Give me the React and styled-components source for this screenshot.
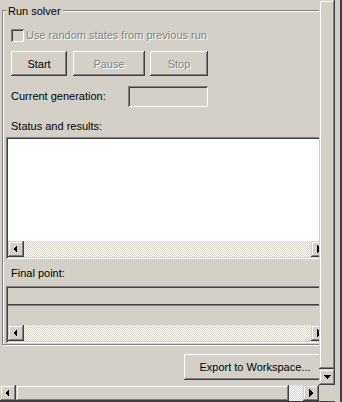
import React from 'react';
import styled, { createGlobalStyle, css } from 'styled-components';

const face = '#d4d0c8';

const GlobalStyle = createGlobalStyle`
  html, body {
    margin: 0;
    padding: 0;
    background: ${face};
  }
  body {
    font-family: "Liberation Sans", Arial, sans-serif;
    font-size: 11px;
    color: #000;
  }
  * {
    box-sizing: border-box;
  }
`;

const raised = css`
  background: ${face};
  box-shadow: inset -1px -1px #404040, inset 1px 1px #fff, inset -2px -2px #808080,
    inset 2px 2px ${face};
`;

const scrollRaised = css`
  background: ${face};
  box-shadow: inset -1px -1px #404040, inset 1px 1px ${face}, inset -2px -2px #808080,
    inset 2px 2px #fff;
`;

const sunken = css`
  box-shadow: inset 1px 1px #808080, inset -1px -1px #fff, inset 2px 2px #404040,
    inset -2px -2px ${face};
`;

const checkered = css`
  background-color: #fff;
  background-image: repeating-conic-gradient(${face} 0 25%, #fff 0 50%);
  background-size: 2px 2px;
`;

const Window = styled.div`
  width: 342px;
  height: 402px;
  display: flex;
  background: ${face};
  overflow: hidden;
`;

const Main = styled.div`
  width: 335px;
  display: flex;
  flex-direction: column;
`;

const Upper = styled.div`
  height: 385px;
  display: flex;
`;

const Viewport = styled.div`
  width: 319px;
  overflow: hidden;
`;

const Content = styled.div`
  width: 360px;
  display: flex;
  flex-direction: column;
  align-items: flex-start;
`;

const RightEdge = styled.div`
  width: 7px;
  height: 100%;
  background: ${face};
  border-right: 2px solid #404040;
`;

const GroupBox = styled.div`
  margin: 10px 0 0 2px;
  width: 336px;
  padding: 0 0 1px 3px;
  border: 1px solid #808080;
  box-shadow: inset 1px 1px #fff, 1px 1px #fff;
  display: flex;
  flex-direction: column;
  align-items: flex-start;
`;

const Title = styled.div`
  margin: -6px 0 0 1px;
  padding: 0 2px 0 1px;
  line-height: 13px;
  background: ${face};
`;

const CheckRow = styled.label`
  display: flex;
  align-items: center;
  gap: 2px;
  margin: 11px 0 0 5px;
  height: 13px;
`;

const CheckBox = styled.span`
  width: 13px;
  height: 13px;
  background: ${face};
  ${sunken};
`;

const DisabledText = styled.span`
  color: #808080;
  text-shadow: 1px 1px #fff;
  line-height: 13px;
`;

const ButtonRow = styled.div`
  display: flex;
  margin: 9px 0 0 5px;
`;

const Button = styled.button`
  ${raised};
  width: ${(p) => p.$w}px;
  height: ${(p) => p.$h || 25}px;
  margin-left: ${(p) => p.$gap || 0}px;
  border: none;
  padding: 0;
  font: inherit;
  color: ${(p) => (p.disabled ? '#808080' : '#000')};
  text-shadow: ${(p) => (p.disabled ? '1px 1px #fff' : 'none')};
`;

const GenRow = styled.div`
  display: flex;
  align-items: center;
  margin: 10px 0 0 5px;
`;

const Label = styled.div`
  width: ${(p) => (p.$w ? `${p.$w}px` : 'auto')};
  margin: ${(p) => p.$m || '0'};
  line-height: 13px;
`;

const Field = styled.div`
  width: 80px;
  height: 21px;
  background: ${face};
  box-shadow: inset 1px 1px #808080, inset -1px -1px #fff, inset 2px 2px #404040,
    inset -2px -2px ${face};
`;

const ListFrame = styled.div`
  ${sunken};
  width: 323px;
  height: ${(p) => p.$h}px;
  margin-top: ${(p) => p.$mt}px;
  padding: 2px;
  display: flex;
  flex-direction: column;
  background: ${(p) => (p.$white ? '#fff' : face)};
`;

const ListBody = styled.div`
  flex: 1;
`;

const HeaderRow = styled.div`
  height: 17px;
  border-bottom: 1px solid #404040;
  box-shadow: 0 1px #808080;
`;

const HScroll = styled.div`
  height: 16px;
  width: ${(p) => (p.$w ? `${p.$w}px` : 'auto')};
  display: flex;
  flex-shrink: 0;
`;

const Track = styled.div`
  flex: 1;
  display: flex;
  ${checkered};
`;

const Thumb = styled.div`
  ${scrollRaised};
  width: ${(p) => p.$w}px;
  height: 100%;
`;

const ArrowBox = styled.div`
  ${scrollRaised};
  width: 16px;
  height: 16px;
  flex-shrink: 0;
  display: flex;
  align-items: center;
  justify-content: center;
`;

const VScroll = styled.div`
  width: 16px;
  display: flex;
  flex-direction: column;
`;

const VThumb = styled.div`
  ${scrollRaised};
  flex: 1;
`;

const Corner = styled.div`
  width: 16px;
  height: 16px;
  background: ${face};
`;

const BottomLine = styled.div`
  height: 1px;
  background: #404040;
`;

const ExportButton = styled(Button)`
  margin: 9px 0 0 184px;
`;

const arrows = {
  left: '9,4 5,8 9,12',
  right: '6,4 10,8 6,12',
  down: '4,6 12,6 8,10',
};

const Arrow = ({ dir }) => (
  <ArrowBox>
    <svg width="16" height="16" viewBox="0 0 16 16">
      <polygon points={arrows[dir]} fill="#000" shapeRendering="crispEdges" />
    </svg>
  </ArrowBox>
);

const ScrollBar = ({ thumb, width }) => (
  <HScroll $w={width}>
    <Arrow dir="left" />
    {thumb ? <Thumb $w={thumb} /> : null}
    <Track />
    <Arrow dir="right" />
  </HScroll>
);

const App = () => {
  return (
    <>
      <GlobalStyle />
      <Window>
        <Main>
          <Upper>
            <Viewport>
              <Content>
                <GroupBox>
                  <Title>Run solver</Title>
                  <CheckRow>
                    <CheckBox />
                    <DisabledText>Use random states from previous run</DisabledText>
                  </CheckRow>
                  <ButtonRow>
                    <Button $w={56}>Start</Button>
                    <Button $w={72} $gap={6} disabled>
                      Pause
                    </Button>
                    <Button $w={58} $gap={5} disabled>
                      Stop
                    </Button>
                  </ButtonRow>
                  <GenRow>
                    <Label $w={117}>Current generation:</Label>
                    <Field />
                  </GenRow>
                  <Label $m="13px 0 0 5px">Status and results:</Label>
                  <ListFrame $h={122} $mt={4} $white>
                    <ListBody />
                    <ScrollBar />
                  </ListFrame>
                  <Label $m="8px 0 0 5px">Final point:</Label>
                  <ListFrame $h={57} $mt={6}>
                    <HeaderRow />
                    <ListBody />
                    <ScrollBar />
                  </ListFrame>
                </GroupBox>
                <ExportButton $w={142} $h={26}>
                  Export to Workspace...
                </ExportButton>
              </Content>
            </Viewport>
            <VScroll>
              <VThumb />
              <Arrow dir="down" />
            </VScroll>
          </Upper>
          <HScroll>
            <ScrollBar thumb={273} width={319} />
            <Corner />
          </HScroll>
          <BottomLine />
        </Main>
        <RightEdge />
      </Window>
    </>
  );
};

export default App;
